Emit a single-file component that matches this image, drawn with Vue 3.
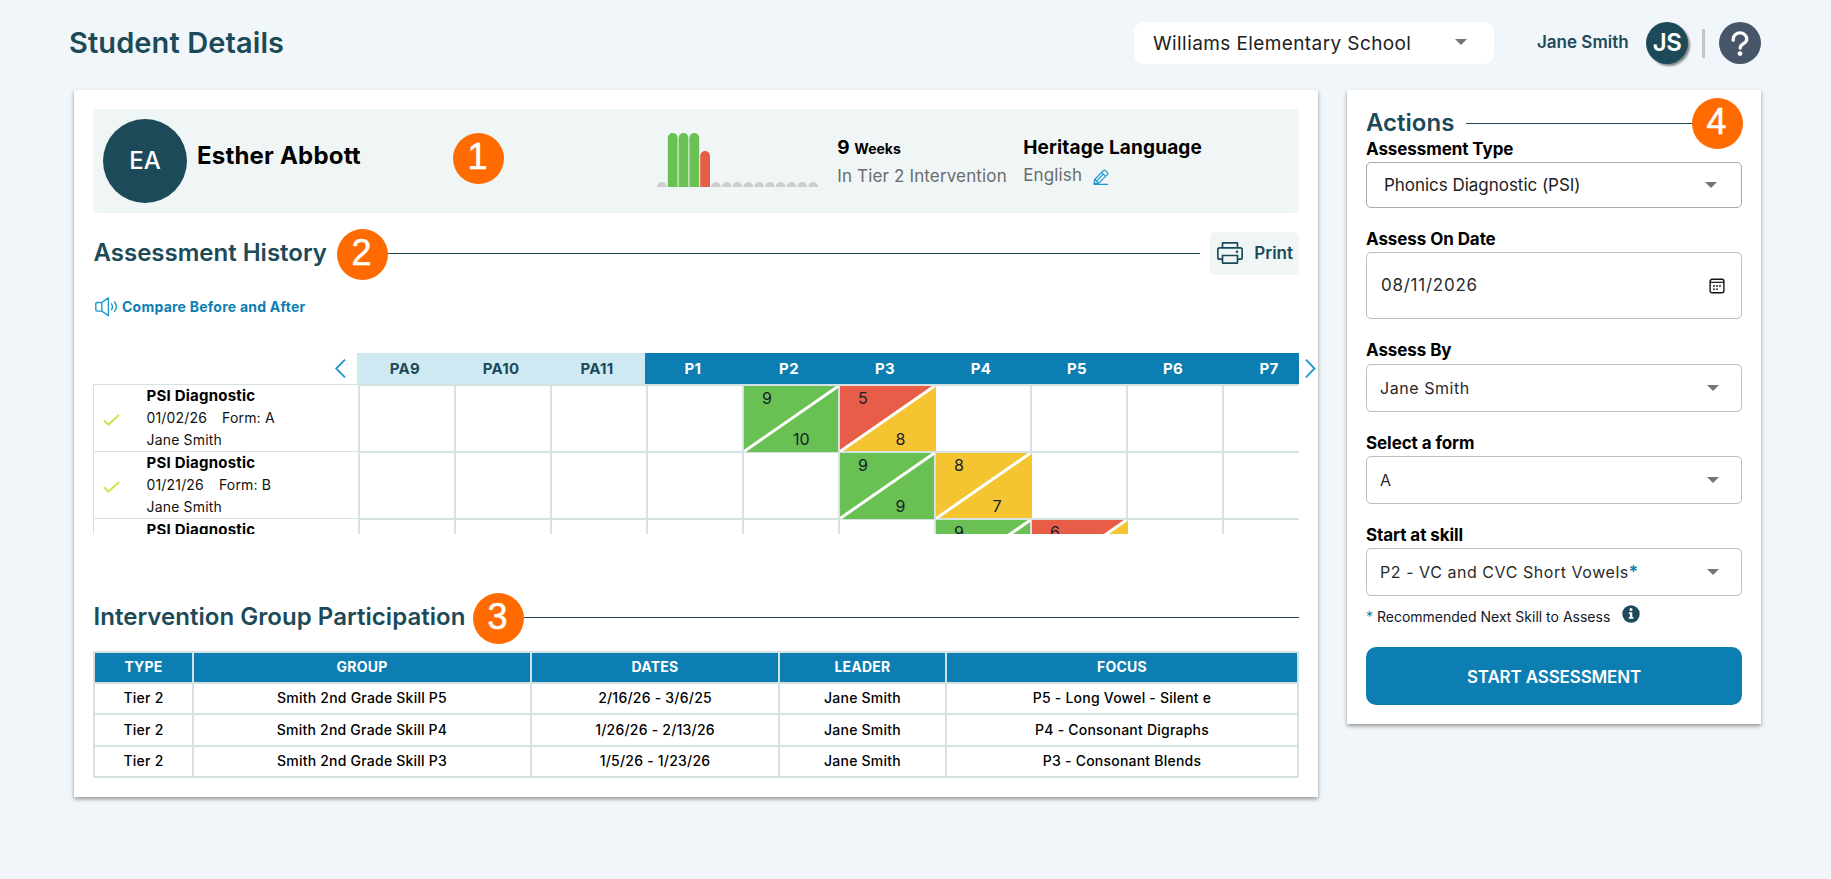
<script setup>
const bars = ['none', 'full', 'full', 'full', 'part', ...Array(10).fill('none')]

const skills = ['PA9', 'PA10', 'PA11', 'P1', 'P2', 'P3', 'P4', 'P5', 'P6', 'P7']

const GREEN = '#69c053'
const RED = '#e85d47'
const YELLOW = '#f4c531'

const history = [
  {
    date: '01/02/26', form: 'A', by: 'Jane Smith',
    scores: { P2: [9, GREEN, 10, GREEN], P3: [5, RED, 8, YELLOW] }
  },
  {
    date: '01/21/26', form: 'B', by: 'Jane Smith',
    scores: { P3: [9, GREEN, 9, GREEN], P4: [8, YELLOW, 7, YELLOW] }
  },
  {
    scores: { P4: [9, GREEN, null, GREEN], P5: [6, RED, null, YELLOW] }
  }
]

const columns = ['TYPE', 'GROUP', 'DATES', 'LEADER', 'FOCUS']
const groups = [
  ['Tier 2', 'Smith 2nd Grade Skill P5', '2/16/26 - 3/6/25', 'Jane Smith', 'P5 - Long Vowel - Silent e'],
  ['Tier 2', 'Smith 2nd Grade Skill P4', '1/26/26 - 2/13/26', 'Jane Smith', 'P4 - Consonant Digraphs'],
  ['Tier 2', 'Smith 2nd Grade Skill P3', '1/5/26 - 1/23/26', 'Jane Smith', 'P3 - Consonant Blends']
]
</script>

<template>
  <div class="page">
    <header class="top">
      <h1>Student Details</h1>
      <div class="school">
        <span>Williams Elementary School</span>
        <i class="caret"></i>
      </div>
      <span class="user">Jane Smith</span>
      <span class="user-avatar">JS</span>
      <i class="divider"></i>
      <svg class="help" viewBox="0 0 42 42">
        <circle cx="21" cy="21" r="21" fill="#475569" />
        <path d="M14.200 18.200V17a6.800 6.100 0 0 1 13.600 0c0 5.400-6.600 3.800-6.600 9" fill="none" stroke="#fff" stroke-width="3.300" stroke-linecap="round" />
        <circle cx="21" cy="31.600" r="2.400" fill="#fff" />
      </svg>
    </header>

    <div class="body">
      <main class="card main">
        <section class="student">
          <span class="avatar">EA</span>
          <span class="name">Esther Abbott</span>
          <span class="num num-1">1</span>
          <svg class="bars" viewBox="0 0 162 54">
            <template v-for="(b, i) in bars" :key="i">
              <path v-if="b === 'none'" :transform="`translate(${i * 10.8} 0)`" d="M0 54A4.900 4.900 0 0 1 9.800 54z" fill="#cecece" />
              <path v-else-if="b === 'full'" :transform="`translate(${i * 10.8} 0)`" d="M0 54V4.900A4.900 4.900 0 0 1 9.800 4.900V54z" fill="#69c053" />
              <path v-else :transform="`translate(${i * 10.8} 0)`" d="M0 54V22.900A4.900 4.900 0 0 1 9.800 22.900V54z" fill="#e85d47" />
            </template>
          </svg>
          <div class="fact weeks">
            <div class="big">9 <small>Weeks</small></div>
            <div class="sub">In Tier 2 Intervention</div>
          </div>
          <div class="fact">
            <div class="big">Heritage Language</div>
            <div class="sub">
              English
              <svg class="pencil" viewBox="0 0 16 16" fill="none" stroke="#1b96cf" stroke-width="1.200" stroke-linejoin="round">
                <path d="M1 14.700 1.700 10.500 10.300 1.600Q11.300 .6 12.400 1.600L14.400 3.600Q15.300 4.600 14.400 5.600L5.600 14.100z" />
                <path d="M8.600 3.400l3.900 3.900M10.300 5.200l-6.800 6.900M1.700 10.500l3.900 3.600M.8 15.300H15.200" />
              </svg>
            </div>
          </div>
        </section>

        <div class="heading history-head">
          <h2>Assessment History</h2>
          <span class="num">2</span>
          <i class="rule"></i>
          <button class="print">
            <svg viewBox="0 0 26 22" fill="none" stroke="#1c4a59" stroke-width="1.700">
              <path d="M5.500 5.800V1.400Q5.500 .8 6.100 .8H19.900Q20.500 .8 20.500 1.400V5.800" />
              <path d="M5.500 17.200H2.500Q.8 17.200 .8 15.500V7.500Q.8 5.800 2.500 5.800H23.500Q25.200 5.800 25.200 7.500V15.500Q25.200 17.200 23.500 17.200H20.500" />
              <path d="M5.500 13.500H20.500V20.600Q20.500 21.200 19.900 21.200H6.100Q5.500 21.200 5.500 20.600z" />
              <circle cx="20" cy="9.800" r="1.300" fill="#1c4a59" stroke="none" />
            </svg>
            <span>Print</span>
          </button>
        </div>

        <div class="compare">
          <svg viewBox="0 0 23 20" fill="none" stroke="#1b96cf" stroke-width="1.400">
            <path d="M6.800 5.500H2.200Q.8 5.500 .8 6.900V12.700Q.8 14.100 2.200 14.100H6.800zM6.800 5.500 13.400 .9V18.700L6.800 14.100" stroke-linejoin="round" />
            <path d="M16.400 6.900Q18.600 9.800 16.400 12.700M19.500 5Q23.300 9.800 19.500 14.600" stroke-linecap="round" />
          </svg>
          <span>Compare Before and After</span>
        </div>

        <div class="history">
          <div class="skill-row">
            <svg class="arrow prev" viewBox="0 0 11 19"><path d="M10 .7 1.200 9.500 10 18.300" /></svg>
            <div class="skills">
              <span v-for="(s, i) in skills" :key="s" :class="{ pa: i < 3 }">{{ s }}</span>
            </div>
            <svg class="arrow next" viewBox="0 0 11 19"><path d="M1 .7 9.500 9.500 1 18.300" /></svg>
          </div>
          <div class="rows">
            <div v-for="(h, r) in history" :key="r" class="row">
              <div class="test">
                <svg v-if="h.date" viewBox="0 0 17 12"><path d="M1 6.200 5.400 10.600 16 1" /></svg>
                <div class="test-info">
                  <strong>PSI Diagnostic</strong>
                  <template v-if="h.date">
                    <div><span class="date">{{ h.date }}</span><span>Form: {{ h.form }}</span></div>
                    <div>{{ h.by }}</div>
                  </template>
                </div>
              </div>
              <div v-for="s in skills" :key="s" class="cell">
                <template v-if="h.scores[s]">
                  <svg class="split" viewBox="0 0 96 66">
                    <path d="M0 0H94V1L1 66H0z" :fill="h.scores[s][1]" />
                    <path v-if="h.scores[s][3] === YELLOW" d="M96 0V65H0z" :fill="YELLOW" />
                    <path v-else d="M94 0V66H0z" :fill="h.scores[s][3]" />
                    <path d="M0 65.500 94.500 0" stroke="#fff" stroke-width="3" />
                  </svg>
                  <span class="first">{{ h.scores[s][0] }}</span>
                  <span v-if="h.scores[s][2]" class="second">{{ h.scores[s][2] }}</span>
                </template>
              </div>
            </div>
          </div>
        </div>

        <div class="heading groups-head">
          <h2>Intervention Group Participation</h2>
          <span class="num">3</span>
          <i class="rule"></i>
        </div>

        <div class="groups">
          <div class="groups-row groups-cols">
            <span v-for="c in columns" :key="c">{{ c }}</span>
          </div>
          <div v-for="(g, i) in groups" :key="i" class="groups-row">
            <span v-for="(c, j) in g" :key="j">{{ c }}</span>
          </div>
        </div>
      </main>

      <aside class="card side">
        <div class="heading actions-head">
          <h2>Actions</h2>
          <i class="rule"></i>
          <span class="num">4</span>
        </div>

        <label>Assessment Type</label>
        <div class="field type">
          <span>Phonics Diagnostic (PSI)</span>
          <i class="caret"></i>
        </div>

        <label>Assess On Date</label>
        <div class="field on-date">
          <span>08/11/2026</span>
          <svg viewBox="0 0 16 16">
            <rect x="1.100" y="1.300" width="13.800" height="13.500" rx="2" fill="none" stroke="#111" stroke-width="1.400" />
            <path d="M1 4.300H15" stroke="#111" stroke-width="1.200" />
            <g fill="#111">
              <circle cx="5" cy="8" r=".9" /><circle cx="8" cy="8" r=".9" /><circle cx="11" cy="8" r=".9" />
              <circle cx="5" cy="11.200" r=".9" /><circle cx="8" cy="11.200" r=".9" />
            </g>
          </svg>
        </div>

        <label>Assess By</label>
        <div class="field by">
          <span>Jane Smith</span>
          <i class="caret"></i>
        </div>

        <label>Select a form</label>
        <div class="field form">
          <span>A</span>
          <i class="caret"></i>
        </div>

        <label>Start at skill</label>
        <div class="field form">
          <span>P2 - VC and CVC Short Vowels<b>*</b></span>
          <i class="caret"></i>
        </div>

        <div class="note">
          <span><em>*</em> Recommended Next Skill to Assess</span>
          <svg viewBox="0 0 18 18">
            <circle cx="9" cy="9" r="8.700" fill="#1c4a59" />
            <circle cx="9" cy="4.600" r="1.500" fill="#fff" />
            <path d="M6.800 7.200H10.300V12H11.400V13.700H6.800V12H7.900V8.800H6.800z" fill="#fff" />
          </svg>
        </div>

        <button class="start">START ASSESSMENT</button>
      </aside>
    </div>
  </div>
</template>

<style>
body {
  background: #f1f6fa;
}
</style>

<style scoped>
.page {
  box-sizing: border-box;
  width: 1831px;
  height: 879px;
  overflow: hidden;
  background: #f1f6fa;
  font-family: Inter, 'Liberation Sans', sans-serif;
  color: #000;
}
.page * {
  box-sizing: border-box;
}
svg,
i {
  display: block;
  flex: none;
}
button {
  border: 0;
  font-family: inherit;
}
h1,
h2 {
  margin: 0;
  font-weight: 600;
  color: #1c4a59;
  white-space: nowrap;
}

/* top bar */
.top {
  display: flex;
  align-items: center;
  height: 86px;
  padding: 0 70px 0 69px;
}
h1 {
  margin-right: auto;
  padding-bottom: 1px;
  font-size: 29px;
  letter-spacing: 0.1px;
}
.school {
  display: flex;
  align-items: center;
  justify-content: space-between;
  width: 360px;
  height: 42px;
  margin-right: 1px;
  padding: 0 27px 0 19px;
  border-radius: 10px;
  background: #fff;
  color: #212121;
  font-size: 19px;
  letter-spacing: 0.4px;
}
.school .caret {
  margin-bottom: 2px;
}
.caret {
  border: 6px solid transparent;
  border-top-color: #757575;
  border-bottom: 0;
}
.user {
  width: 92px;
  margin: -2px 17px 0 42px;
  color: #1c4a59;
  font-size: 17px;
  font-weight: 600;
  white-space: nowrap;
}
.user-avatar {
  width: 42px;
  height: 42px;
  border-radius: 50%;
  background: #1c4a59;
  box-shadow: 2px 2px 2px rgba(0, 0, 0, 0.45);
  color: #fff;
  font-size: 24px;
  font-weight: 600;
  line-height: 41px;
  letter-spacing: -0.4px;
  text-align: center;
}
.divider {
  width: 3px;
  height: 29px;
  margin: 0 14px;
  background: #c1c5c8;
}
.help {
  width: 42px;
  height: 42px;
}

/* cards */
.body {
  display: flex;
  align-items: flex-start;
  gap: 29px;
  margin-top: 4px;
  padding-left: 74px;
}
.card {
  padding: 19px;
  background: #fff;
  box-shadow: 0 2px 4px rgba(0, 0, 0, 0.4);
}
.main {
  width: 1244px;
  height: 707px;
}
.side {
  width: 414px;
  height: 634px;
}

.heading {
  display: flex;
  align-items: center;
}
.heading h2 {
  font-size: 24px;
  line-height: 28px;
}
.rule {
  flex: 1;
  height: 1px;
  background: #1c4a59;
}
.num {
  flex: none;
  width: 51px;
  height: 51px;
  padding-right: 1px;
  border-radius: 50%;
  background: #ff6b00;
  color: #fff;
  font-family: 'Liberation Sans', sans-serif;
  font-size: 36px;
  line-height: 47px;
  text-align: center;
  -webkit-text-stroke: 0.5px #fff;
}

/* student banner */
.student {
  display: flex;
  height: 104px;
  padding: 10px;
  border-radius: 4px;
  background: #f0f6f6;
}
.avatar {
  width: 84px;
  height: 84px;
  border-radius: 50%;
  background: #1c4a59;
  color: #fff;
  font-size: 24px;
  font-weight: 500;
  line-height: 83px;
  text-align: center;
}
.name {
  width: 254px;
  margin-left: 10px;
  font-size: 24px;
  font-weight: 700;
  line-height: 74px;
  letter-spacing: 0.2px;
}
.num-1 {
  margin: 13.500px 153.700px 0 1.500px;
}
.bars {
  width: 162px;
  height: 54px;
  margin: 14px 17px 0 0;
}
.fact {
  padding-top: 15px;
  white-space: nowrap;
}
.weeks {
  width: 187px;
  padding-left: 1px;
}
.big {
  font-size: 19px;
  font-weight: 700;
  line-height: 28px;
  letter-spacing: 0.15px;
}
.big small {
  font-size: 14px;
  letter-spacing: 0;
}
.sub {
  display: flex;
  align-items: center;
  margin-top: -1px;
  color: #6b6b6b;
  font-size: 17px;
  line-height: 28px;
  letter-spacing: 0.15px;
}
.pencil {
  width: 16px;
  height: 16px;
  margin: 3px 0 0 11px;
}

/* assessment history */
.history-head {
  height: 51px;
  margin-top: 15px;
}
.history-head h2 {
  width: 243.500px;
  padding-left: 0.500px;
}
.history-head h2,
.groups-head h2 {
  margin-bottom: 1px;
}
.history-head .num,
.groups-head .num {
  margin-top: 1px;
}
.history-head .rule {
  margin: 0 10px 0 0;
}
.print {
  display: flex;
  align-items: center;
  justify-content: space-between;
  width: 89px;
  height: 43px;
  padding: 0 6px 1px 7px;
  border-radius: 5px;
  background: #f0f6f6;
  color: #1c4a59;
  font-size: 17px;
  font-weight: 600;
}
.print svg {
  width: 26px;
  height: 22px;
  margin-bottom: 1px;
}
.compare {
  display: flex;
  align-items: center;
  gap: 4.500px;
  height: 20px;
  margin: 18px 0 0 1.500px;
  color: #0d7eb1;
  font-size: 14px;
  font-weight: 700;
  letter-spacing: 0.24px;
}
.compare svg {
  width: 23px;
  height: 20px;
}
.compare span {
  margin-bottom: 2px;
}
.history {
  width: 1206px;
  height: 181px;
  margin-top: 36px;
}
.skill-row {
  display: flex;
  align-items: center;
  width: 1225px;
  height: 31px;
  padding-left: 242px;
}
.arrow {
  width: 11px;
  height: 19px;
  fill: none;
  stroke: #1b96cf;
  stroke-width: 1.800;
}
.prev {
  margin-right: 11px;
}
.next {
  margin-left: 5.500px;
}
.skills {
  display: flex;
  width: 942px;
  height: 31px;
  overflow: hidden;
}
.skills span {
  flex: none;
  width: 96px;
  background: #0d7eb1;
  color: #fff;
  font-size: 15px;
  font-weight: 700;
  line-height: 31px;
  letter-spacing: 0.3px;
  text-align: center;
}
.skills .pa {
  background: #cfe9f2;
  color: #1c4a59;
}
.rows {
  height: 150px;
  overflow: hidden;
}
.row {
  display: flex;
  height: 67px;
}
.test {
  display: flex;
  flex: none;
  width: 265px;
  padding-left: 52.500px;
  border: 1px solid #d5e2e3;
  border-width: 1px 0 0 1px;
}
.test svg {
  width: 17px;
  height: 12px;
  margin: 29px 26.500px 0 -43.500px;
  fill: none;
  stroke: #d3de45;
  stroke-width: 1.900;
}
.test-info {
  font-size: 14px;
  line-height: 22px;
  letter-spacing: 0.17px;
  color: #111;
}
.test-info strong {
  display: block;
  color: #000;
  font-size: 15px;
  letter-spacing: 0.22px;
}
.date {
  margin-right: 15px;
}
.cell {
  position: relative;
  flex: none;
  width: 96px;
  border: 2px solid #d5e2e3;
  border-width: 2px 0 0 2px;
  color: #16202b;
  font-size: 16px;
}
.split {
  position: absolute;
  left: 0;
  top: 0;
  z-index: 1;
  width: 96px;
  height: 66px;
}
.first,
.second {
  position: absolute;
  z-index: 2;
  line-height: 20px;
}
.first {
  left: 18px;
  top: 2px;
}
.second {
  right: 28.500px;
  top: 43px;
}

/* intervention groups */
.groups-head {
  height: 51px;
  margin-top: 58px;
}
.groups-head h2 {
  width: 379.500px;
  padding-left: 0.500px;
  letter-spacing: 0.04px;
}
.groups {
  margin-top: 8px;
  border: 2px solid #d5e2e3;
  background: #d5e2e3;
  display: grid;
  gap: 2px;
  grid-template-rows: 29px 29px 30px 29px;
}
.groups-row {
  display: grid;
  grid-template-columns: 97px 336px 246px 165px 350px;
  gap: 2px;
}
.groups-row span {
  display: flex;
  align-items: center;
  justify-content: center;
  padding-bottom: 2px;
  background: #fff;
  font-size: 14px;
  font-weight: 450;
  letter-spacing: 0.22px;
}
.groups-row.groups-cols span {
  background: #0d7eb1;
  color: #fff;
  font-weight: 700;
}

/* actions */
.actions-head {
  height: 28px;
}
.actions-head .rule {
  margin-left: 12px;
}
.actions-head .num {
  margin-right: -0.500px;
}
label {
  display: block;
  height: 24px;
  margin: 19px 0 1px;
  font-size: 17px;
  font-weight: 700;
  line-height: 24px;
  letter-spacing: -0.08px;
}
.actions-head + label {
  margin-top: 0;
}
.field {
  display: flex;
  align-items: center;
  justify-content: space-between;
  height: 48px;
  padding: 0 22px 0 13px;
  border: 1px solid #bdbdbd;
  border-radius: 5px;
  color: #2a2a2a;
  font-size: 16px;
  letter-spacing: 0.550px;
}
.field span {
  margin-bottom: 1px;
}
.field b {
  color: #0d7eb1;
  font-size: 17px;
  font-weight: 600;
  line-height: 1;
}
.by {
  margin-top: 2px;
}
.type {
  height: 46px;
  padding: 0 24px 0 17px;
  border-color: #a9a9a9;
  color: #212121;
  font-size: 17px;
  letter-spacing: -0.03px;
}
.on-date {
  height: 67px;
  padding: 0 16.500px 0 14px;
  font-size: 17px;
  letter-spacing: 0.750px;
}
.on-date span {
  margin-bottom: 2px;
}
.on-date svg {
  width: 16px;
  height: 16px;
}
.note {
  display: flex;
  align-items: center;
  gap: 11.500px;
  height: 25px;
  margin-top: 8px;
  color: #111827;
  font-size: 14px;
}
.note em {
  color: #0d7eb1;
  font-style: normal;
}
.note svg {
  width: 18px;
  height: 18px;
  margin-bottom: 5px;
}
.start {
  width: 100%;
  height: 58px;
  margin-top: 18px;
  padding: 2px 0 0;
  border-radius: 10px;
  background: #0d7eb1;
  color: #fff;
  font-size: 17px;
  font-weight: 600;
  letter-spacing: -0.150px;
}
</style>
